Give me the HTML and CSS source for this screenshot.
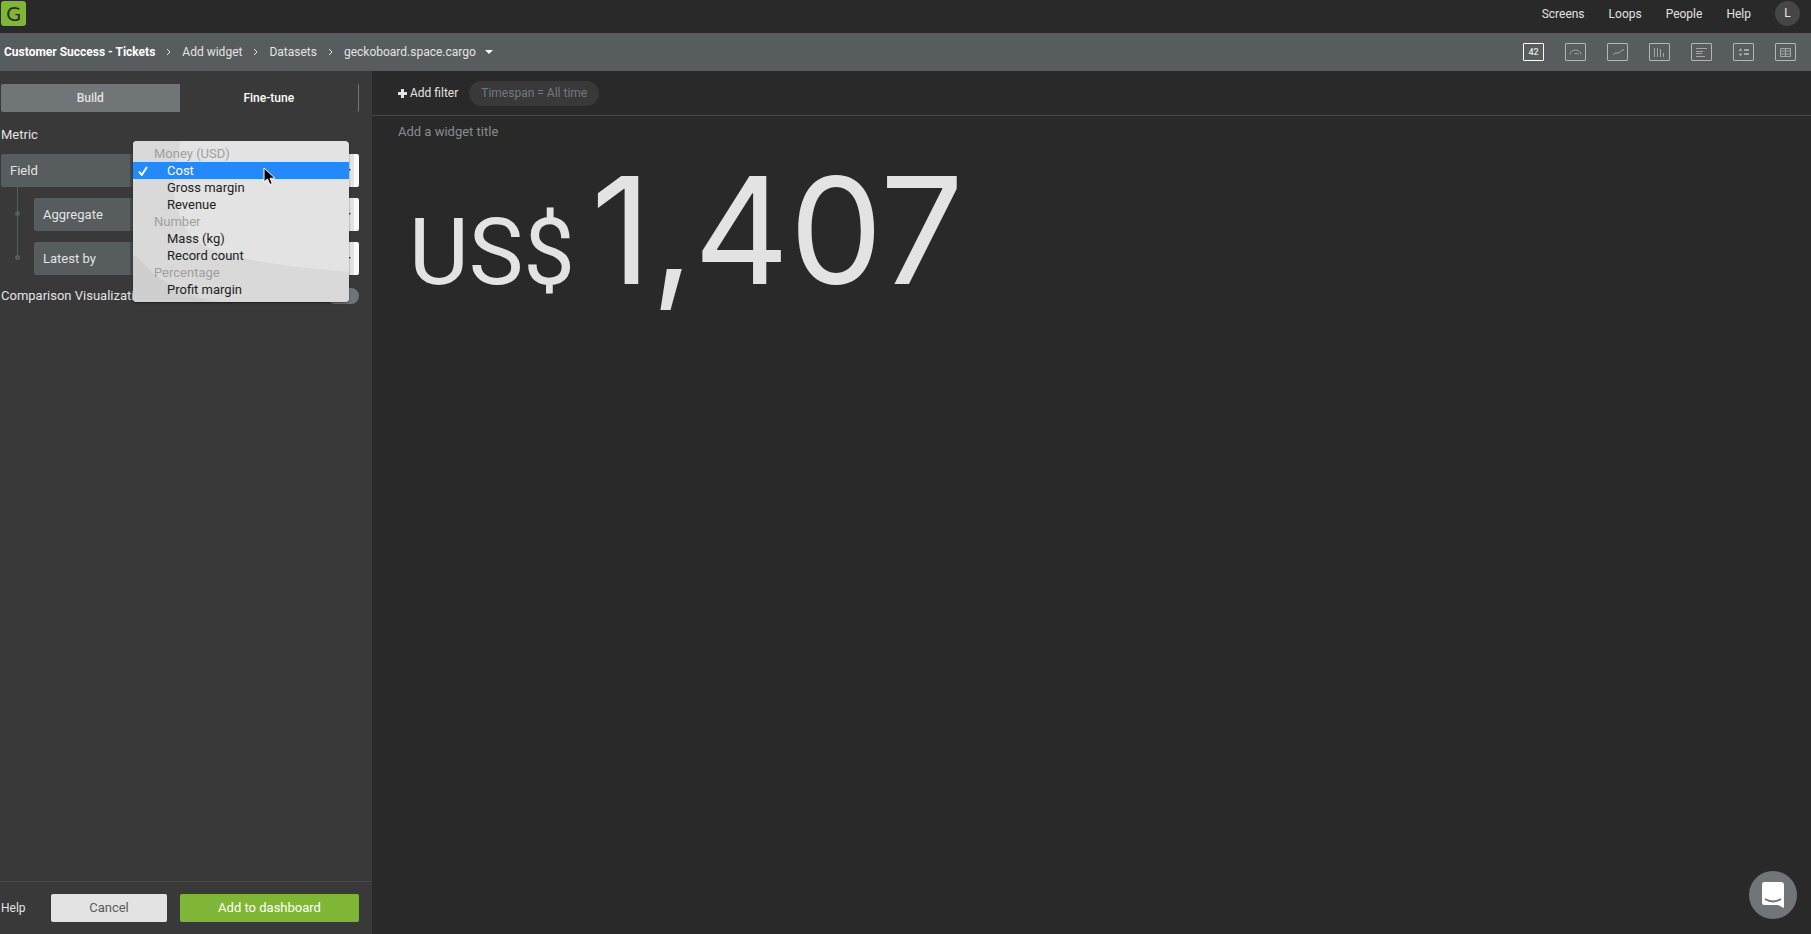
FILE: index.html
```
<!DOCTYPE html>
<html lang="en">
<head>
<meta charset="utf-8">
<title>Add widget - Geckoboard</title>
<link rel="stylesheet" href="styles.css">
</head>
<body>
<header class="topbar">
	<a class="logo" href="#">G</a>
	<nav class="mainnav">
		<a href="#">Screens</a>
		<a href="#">Loops</a>
		<a href="#">People</a>
		<a href="#">Help</a>
		<a class="avatar" href="#">L</a>
	</nav>
</header>

<div class="subbar">
	<nav class="crumbs">
		<a class="board" href="#">Customer Success - Tickets</a>
		<svg class="chev" width="5" height="8" viewBox="0 0 5 8"><path d="M1 1l3 3-3 3"/></svg>
		<a href="#">Add widget</a>
		<svg class="chev" width="5" height="8" viewBox="0 0 5 8"><path d="M1 1l3 3-3 3"/></svg>
		<a href="#">Datasets</a>
		<svg class="chev" width="5" height="8" viewBox="0 0 5 8"><path d="M1 1l3 3-3 3"/></svg>
		<button class="dataset" type="button">geckoboard.space.cargo <span class="caret"></span></button>
	</nav>
	<div class="viz">
		<button class="current" type="button" aria-label="Number">42</button>
		<button type="button" aria-label="Gauge"><svg width="19" height="16" viewBox="0 0 19 16"><path d="M4 10.500C4.500 7.500 6.500 6 9.500 6s5 1.500 5.500 4.500M8.500 9.500q3-1 4 1"/></svg></button>
		<button type="button" aria-label="Line"><svg width="19" height="16" viewBox="0 0 19 16"><path d="M5 11l2-2h4l2-2 3-1.500"/></svg></button>
		<button type="button" aria-label="Column"><svg width="19" height="16" viewBox="0 0 19 16"><path d="M4.500 4v9M7.500 4v9M10.500 5v8M13.500 9v4"/></svg></button>
		<button type="button" aria-label="Bar"><svg width="19" height="16" viewBox="0 0 19 16"><path d="M4 4.500h11M4 7.500h7M4 9.500h6M4 12.500h9"/></svg></button>
		<button type="button" aria-label="Leaderboard"><svg width="19" height="16" viewBox="0 0 19 16"><path class="thick" d="M10 6h5M10 10h5"/><path class="solid" d="M4.500 7L6.500 4l2 3zM4.500 9.500l2 3 2-3z"/></svg></button>
		<button type="button" aria-label="Table"><svg width="19" height="16" viewBox="0 0 19 16"><path d="M4.500 4.500h10v8h-10zM4.500 7h10M4.500 10h10M9.500 4.500v8"/></svg></button>
	</div>
</div>

<div class="wrap">
	<aside class="side">
		<div class="tabs">
			<button class="current" type="button">Build</button>
			<button type="button">Fine-tune</button>
		</div>
		<h2>Metric</h2>
		<div class="fields">
			<div class="row">
				<label for="field">Field</label>
				<div class="pick">
					<select id="field"><option>Cost</option></select>
					<div class="menu" role="listbox" aria-label="Field">
						<svg class="backdrop" width="216" height="161" viewBox="0 0 216 161">
							<path class="mid" d="M0 0h48q-20 62 15 100 25 20 153 31v30H0z"/>
							<path class="low" d="M0 115h3l17 17q28 23 67 29H0z"/>
						</svg>
						<div class="group">Money (USD)</div>
						<div class="item on" role="option" aria-selected="true"><svg class="tick" width="10" height="10" viewBox="0 0 10 10"><path d="M1 5.500L3.700 9 9 1"/></svg>Cost</div>
						<div class="item" role="option">Gross margin</div>
						<div class="item" role="option">Revenue</div>
						<div class="group">Number</div>
						<div class="item" role="option">Mass (kg)</div>
						<div class="item" role="option">Record count</div>
						<div class="group">Percentage</div>
						<div class="item" role="option">Profit margin</div>
						<svg class="cursor" width="13" height="19" viewBox="0 0 13 19"><path d="M1 1v14l3.500-3 2.300 5.500 2.500-1-2.300-5.300H12z"/></svg>
					</div>
				</div>
			</div>
			<div class="row sub">
				<label for="aggregate">Aggregate</label>
				<div class="pick"><select id="aggregate"><option>Latest</option></select></div>
			</div>
			<div class="row sub">
				<label for="latest">Latest by</label>
				<div class="pick"><select id="latest"><option>Date</option></select></div>
			</div>
		</div>
		<div class="compare">
			<label for="compare">Comparison Visualization</label>
			<input id="compare" type="checkbox">
		</div>
		<div class="actions">
			<a href="#">Help</a>
			<button class="cancel" type="button">Cancel</button>
			<button class="add" type="button">Add to dashboard</button>
		</div>
	</aside>

	<main class="preview">
		<div class="filters">
			<button class="addfilter" type="button"><svg width="9" height="9" viewBox="0 0 9 9"><path d="M4.500 0v9M0 4.500h9"/></svg>Add filter</button>
			<span class="pill">Timespan = All time</span>
		</div>
		<div class="widget">
			<input class="title" type="text" placeholder="Add a widget title" aria-label="Widget title">
			<div class="value"><span class="unit">US$</span><span class="num">1,407</span></div>
		</div>
	</main>
</div>

<button class="chat" type="button" aria-label="Chat"><svg width="24" height="28" viewBox="0 0 24 28"><path d="M3 1h17q3 0 3 3v23l-6-3H3q-2 0-2-2V4q0-3 2-3z"/><path class="smile" d="M4 18q8 5 16 0"/></svg></button>
</body>
</html>
```

FILE: styles.css
```
*{box-sizing:border-box;}
body{margin:0;min-height:100vh;display:flex;flex-direction:column;background:#292929;color:#e3e3e3;font:13px/18px Roboto,"Liberation Sans",sans-serif;}
a{color:inherit;text-decoration:none;}
button,select,input{font:inherit;color:inherit;margin:0;padding:0;border:0;background:none;}
h2{margin:0;font-size:13px;line-height:18px;font-weight:400;}

/* top bar */
.topbar{display:flex;justify-content:space-between;align-items:flex-start;height:33px;padding:1px 11px 0 1px;}
.logo{width:25px;height:25px;border-radius:3px;background:#80b635;color:#292929;font:20px/25px Lato,sans-serif;text-align:center;}
.mainnav{display:flex;align-items:center;gap:24px;font-size:12px;}
.avatar{width:25px;height:25px;border-radius:50%;background:#464646;line-height:25px;text-align:center;}

/* breadcrumbs */
.subbar{display:flex;justify-content:space-between;align-items:center;height:38px;padding:0 15px 0 4px;background:#575c5e;}
.crumbs{display:flex;align-items:center;gap:11px;font-size:12px;}
.board{font-weight:700;color:#fff;}
.chev{fill:none;stroke:#e3e3e3;}
.dataset{display:flex;align-items:center;gap:9px;}
.caret{border:4px solid transparent;border-top-color:#fff;border-bottom:0;}
.viz{display:flex;gap:21px;}
.viz button{display:flex;align-items:center;justify-content:center;width:21px;height:18px;border:1px solid #b2b5b6;border-radius:1px;}
.viz .current{border-color:#fff;font-size:9px;font-weight:500;}
.viz path{fill:none;stroke:#a3a6a7;}
.viz .thick{stroke-width:2;}
.viz .solid{fill:#a3a6a7;stroke:none;}

.wrap{flex:1;display:flex;}

/* left panel */
.side{display:flex;flex-direction:column;width:372px;background:#393939;}
.tabs{display:flex;height:28px;margin:13px 13px 0 1px;border-right:1px solid #73787a;border-radius:2px;}
.tabs button{flex:1;font-size:12px;font-weight:500;color:#fff;}
.tabs .current{background:#707577;color:#e3e3e3;border-radius:2px 0 0 2px;}
.side h2{margin:14px 0 10px 1px;}
.fields{position:relative;display:flex;flex-direction:column;gap:11px;margin:0 13px 0 1px;}
.fields:before{content:"";position:absolute;left:16px;top:33px;width:1px;height:71px;background:#575c5e;}
.row{position:relative;display:flex;height:33px;font-size:13px;}
.row label{flex:none;width:129px;padding:0 9px;border-radius:2px 0 0 2px;background:#575c5e;line-height:33px;}
.sub{margin-left:33px;}
.sub label{width:96px;}
.sub:before{content:"";position:absolute;left:-19px;top:13px;width:5px;height:5px;border-radius:50%;background:#575c5e;}
.pick{position:relative;flex:1;background:#464646;padding-left:3px;border-radius:0 2px 2px 0;}
.pick select{appearance:none;width:100%;height:33px;padding:0 10px;border-radius:0 2px 2px 0;background:linear-gradient(90deg,#e3e3e3,#e3e3e3) right 5px top/5px 33px no-repeat #fafafa;color:#393939;}
.pick:after{content:"";position:absolute;right:8px;top:15px;border:4px solid transparent;border-top-color:#292929;border-bottom:0;}
.menu{position:absolute;z-index:2;left:3px;top:-13px;width:216px;padding:4px 0;border-radius:4px;overflow:hidden;background:#e3e3e3;box-shadow:0 1px 2px rgba(0,0,0,.5);color:#222;font-size:13px;line-height:17px;}
.backdrop{position:absolute;left:0;top:0;}
.mid{fill:#d9d9d9;}
.low{fill:#cfcfcf;}
.group{position:relative;padding-left:21px;color:#a0a0a0;}
.item{position:relative;padding-left:34px;}
.on{background:#2489fc;color:#fff;}
.tick{position:absolute;left:5px;top:4px;fill:none;stroke:#fff;stroke-width:2;}
.cursor{position:absolute;left:130px;top:26px;fill:#000;stroke:#fff;}
.compare{display:flex;justify-content:space-between;align-items:center;margin:12px 13px 0 1px;}
.compare label{font-size:13px;}
.compare input{appearance:none;width:32px;height:16px;border-radius:8px;background:#707577;}
.actions{display:flex;align-items:center;height:53px;margin-top:auto;padding:0 13px 0 1px;border-top:1px solid #464646;font-size:12px;}
.actions a{width:50px;}
.actions button{height:28px;border-radius:2px;font-size:13px;}
.cancel{width:116px;margin-right:13px;background:#e3e3e3;}
.actions .cancel{color:#575c5e;}
.add{flex:1;background:#80b635;color:#fff;}

/* preview */
.preview{flex:1;}
.filters{display:flex;align-items:center;gap:11px;height:45px;padding:0 26px;border-bottom:1px solid #464646;font-size:12px;}
.addfilter{display:flex;align-items:center;gap:3px;}
.addfilter path{stroke:#e3e3e3;stroke-width:3;}
.pill{padding:0 12px;border-radius:13px;background:#393939;color:#73787a;line-height:25px;}
.widget{padding:5px 26px;}
.title{display:block;width:100%;height:20px;font-size:13px;}
.title::placeholder{color:#8a8d8e;opacity:1;}
.value{display:flex;align-items:baseline;gap:16px;padding:0 11px;line-height:180px;}
.unit{font-size:92px;}
.num{font-family:Inter,Roboto,sans-serif;font-size:148px;}

.chat{position:fixed;right:14px;bottom:15px;display:flex;align-items:center;justify-content:center;width:48px;height:48px;border-radius:50%;background:#707577;}
.chat path{fill:#fff;}
.chat .smile{fill:none;stroke:#707577;stroke-width:2;}
```
